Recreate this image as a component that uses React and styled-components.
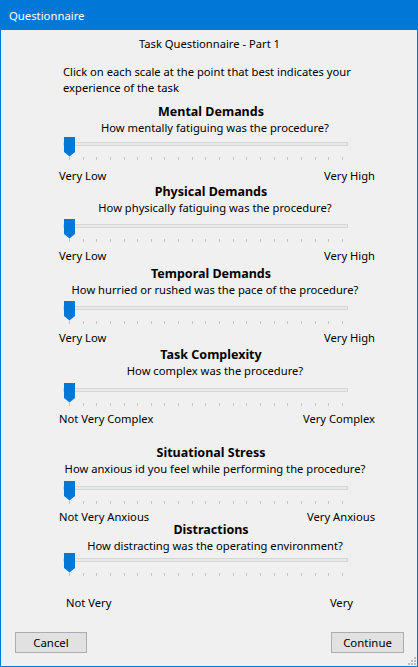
import styled, { createGlobalStyle } from "styled-components"

const sections = [
    { title: "Mental Demands", question: "How mentally fatiguing was the procedure?", low: "Very Low", high: "Very High", top: 8, sGap: 0, lGap: 4 },
    { title: "Physical Demands", question: "How physically fatiguing was the procedure?", low: "Very Low", high: "Very High", top: 0, sGap: 2, lGap: 2 },
    { title: "Temporal Demands", question: "How hurried or rushed was the pace of the procedure?", low: "Very Low", high: "Very High", top: 2, sGap: 2, lGap: 2 },
    { title: "Task Complexity", question: "How complex was the procedure?", low: "Not Very Complex", high: "Very Complex", top: 1, sGap: 3, lGap: 1 },
    { title: "Situational Stress", question: "How anxious id you feel while performing the procedure?", low: "Not Very Anxious", high: "Very Anxious", top: 18, sGap: 3, lGap: 1 },
    { title: "Distractions", question: "How distracting was the operating environment?", low: "Not Very", high: "Very", top: -3, sGap: -2, lGap: 15, narrow: true },
]

const GlobalStyle = createGlobalStyle`
body{
    margin:0;
    font-family: "Noto Sans", "Open Sans", sans-serif;
    font-size:11.2px;
    color:#000;
}
`

const Window = styled.div`
width:418px;
height:667px;
box-sizing:border-box;
background:#F0F0F0;
border:1px solid #0078D7;
border-top:none;
display:flex;
flex-direction:column;
position:relative;
`

const TitleBar = styled.div`
height:30px;
margin:0 -1px;
background:#0078D7;
color:#fff;
display:flex;
align-items:center;
padding-left:9px;
font-size:11.3px;
`

const Heading = styled.div`
margin-top:6px;
line-height:16px;
text-align:center;
padding-left:1px;
`

const Intro = styled.div`
margin:12px 0 0 62px;
width:300px;
line-height:16px;
`

const Section = styled.div`
margin-top:${p => p.top}px;
display:flex;
flex-direction:column;
`

const SectionTitle = styled.div`
font-weight:bold;
font-size:12.5px;
line-height:16px;
text-align:center;
padding-left:4px;
`

const Question = styled.div`
line-height:16px;
text-align:center;
padding-left:12px;
`

const SliderBox = styled.div`
position:relative;
margin:${p => p.gap}px 0 0 62px;
width:285px;
height:28px;
`

const Track = styled.div`
position:absolute;
left:0;
right:0;
top:6px;
height:4px;
box-sizing:border-box;
background:#E7EAEA;
border:1px solid #D6D6D6;
`

const Ticks = styled.div`
position:absolute;
left:6px;
right:5px;
top:21px;
height:4px;
display:flex;
justify-content:space-between;

&>span{
    width:1px;
    height:3px;
    background:#C4C4C4;
}
`

const Thumb = styled.svg`
position:absolute;
left:1px;
top:1px;
`

const Labels = styled.div`
margin-top:${p => p.gap}px;
display:flex;
justify-content:space-between;
padding:${p => p.narrow ? "0 64px 0 65px" : "0 42px 0 58px"};
line-height:16px;
`

const Buttons = styled.div`
margin-top:21px;
display:flex;
justify-content:space-between;
padding:0 13px 0 14px;
`

const Button = styled.button`
width:${p => p.w}px;
height:21px;
background:#E1E1E1;
border:1px solid #ADADAD;
font-family:inherit;
font-size:11.4px;
padding:0;
color:#000;
`

const Grip = styled.svg`
position:absolute;
right:1px;
bottom:1px;
`

function Slider({ gap }) {
    return (
        <SliderBox gap={gap}>
            <Track />
            <Ticks>
                {Array.from({ length: 21 }).map((_, i) => <span key={i} />)}
            </Ticks>
            <Thumb width="11" height="20" viewBox="0 0 11 20">
                <polygon points="0,0 11,0 11,15 5.5,19.5 0,15" fill="#0078D7" />
            </Thumb>
        </SliderBox>
    )
}

export default function App() {
    return (
        <>
            <GlobalStyle />
            <Window>
                <TitleBar>Questionnaire</TitleBar>
                <Heading>Task Questionnaire - Part 1</Heading>
                <Intro>Click on each scale at the point that best indicates your experience of the task</Intro>
                {sections.map(s => (
                    <Section key={s.title} top={s.top}>
                        <SectionTitle>{s.title}</SectionTitle>
                        <Question>{s.question}</Question>
                        <Slider gap={s.sGap} />
                        <Labels gap={s.lGap} narrow={s.narrow}>
                            <span>{s.low}</span>
                            <span>{s.high}</span>
                        </Labels>
                    </Section>
                ))}
                <Buttons>
                    <Button w={72}>Cancel</Button>
                    <Button w={73}>Continue</Button>
                </Buttons>
                <Grip width="10" height="10" viewBox="0 0 10 10">
                    {[[8, 2], [5, 5], [8, 5], [2, 8], [5, 8], [8, 8]].map(([x, y]) => (
                        <rect key={x + "-" + y} x={x} y={y} width="2" height="2" fill="#BDBDBD" />
                    ))}
                </Grip>
            </Window>
        </>
    )
}
